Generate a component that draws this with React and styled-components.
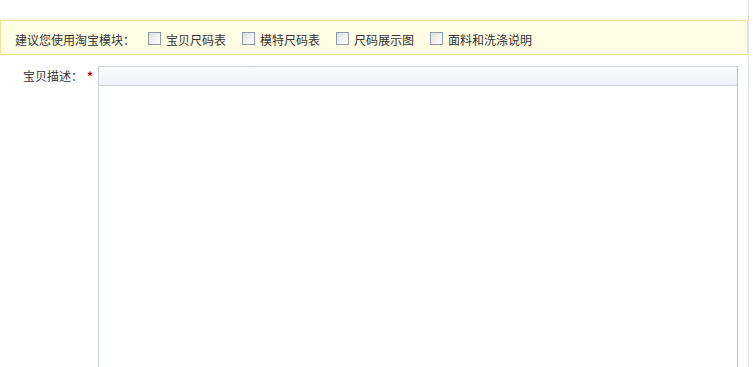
import styled, { createGlobalStyle } from "styled-components";

const GlobalStyle = createGlobalStyle`
body {
  margin: 0;
  background: #fff;
  font-family: "Noto Sans CJK SC", "Noto Sans", sans-serif;
  font-size: 12px;
  color: #333;
}
`;

const modules = ["宝贝尺码表", "模特尺码表", "尺码展示图", "面料和洗涤说明"];

const App = () => {
  return (
    <>
      <GlobalStyle />
      <Page>
        <TipBar>
          <TipText>建议您使用淘宝模块：</TipText>
          <ModuleList>
            {modules.map((name) => (
              <ModuleItem key={name}>
                <CheckBox type="checkbox" />
                <span>{name}</span>
              </ModuleItem>
            ))}
          </ModuleList>
        </TipBar>
        <FieldRow>
          <FieldLabel>
            宝贝描述：<Required>*</Required>
          </FieldLabel>
          <Editor>
            <EditorToolbar />
            <EditorBody />
          </Editor>
        </FieldRow>
      </Page>
    </>
  );
};

export default App;

const Page = styled.div`
width: 749px;
height: 367px;
overflow: hidden;
border-right: 1px solid #dde3e8;
padding-top: 20px;
box-sizing: border-box;
`;

const TipBar = styled.div`
display: flex;
align-items: center;
height: 35px;
box-sizing: border-box;
padding: 4px 0 0 14px;
background: #fffde4;
border: 1px solid #efe0a2;
`;

const TipText = styled.span`
margin-right: 13px;
`;

const ModuleList = styled.div`
display: flex;
gap: 16px;
`;

const ModuleItem = styled.label`
display: flex;
align-items: center;
gap: 5px;
`;

const CheckBox = styled.input`
appearance: none;
margin: 0 0 2px 0;
width: 13px;
height: 13px;
border: 1px solid #8e9aa6;
background: linear-gradient(135deg, #dcdcdc 0%, #f4f4f4 60%, #ffffff 100%);
box-sizing: border-box;
`;

const FieldRow = styled.div`
display: flex;
margin-top: 11px;
`;

const FieldLabel = styled.div`
width: 98px;
box-sizing: border-box;
padding: 0 5px 0 0;
text-align: right;
line-height: 19px;
`;

const Required = styled.span`
color: #b00;
font-weight: bold;
margin-left: 4px;
`;

const Editor = styled.div`
width: 640px;
height: 320px;
border: 1px solid #c9d1d9;
border-right-color: #b9c3cc;
box-sizing: border-box;
display: flex;
flex-direction: column;
`;

const EditorToolbar = styled.div`
height: 18px;
background: linear-gradient(#fbfcfe, #eef2f7);
border-bottom: 1px solid #c9d1d9;
`;

const EditorBody = styled.div`
flex: 1;
background: #fff;
`;
